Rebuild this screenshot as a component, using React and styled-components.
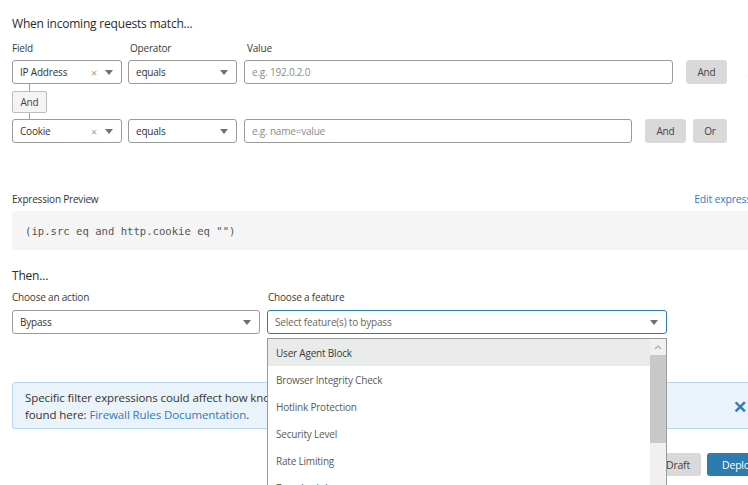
import React from "react";
import styled, { createGlobalStyle } from "styled-components";

const FONT = `"Open Sans", "Liberation Sans", sans-serif`;

const Global = createGlobalStyle`
  html, body { margin: 0; padding: 0; background: #fff; overflow: hidden; }
  body { font-family: ${FONT}; color: #333; letter-spacing: -0.2px; }
  * { box-sizing: border-box; }
`;

const Page = styled.div`
  width: 770px;
  padding: 15px 0 40px 12px;
  display: flex;
  flex-direction: column;
`;

const Heading = styled.div`
  font-size: 12px;
  line-height: 18px;
  color: #2b2b2b;
`;

const LabelRow = styled.div`
  display: flex;
  gap: 8px;
  margin-top: ${(p) => p.mt || 0}px;
`;

const Label = styled.div`
  font-size: 10px;
  line-height: 14px;
  color: #3a3a3a;
  width: ${(p) => (p.w ? p.w + "px" : "auto")};
  flex: ${(p) => (p.w ? "none" : "1")};
`;

const Row = styled.div`
  display: flex;
  align-items: center;
  margin-top: ${(p) => p.mt || 0}px;
`;

const SelectBox = styled.div`
  position: relative;
  width: ${(p) => p.w}px;
  height: 24px;
  flex: none;
  margin-right: ${(p) => p.mr || 0}px;
  border: 1px solid ${(p) => (p.focus ? "#2c7cb0" : "#9b9b9b")};
  border-radius: 3px;
  background: #fff;
  display: flex;
  align-items: center;
  padding: 0 8px 0 7px;
  font-size: 10px;
  color: ${(p) => (p.placeholder ? "#666" : "#333")};
`;

const SelectText = styled.span`
  flex: 1;
  white-space: nowrap;
  overflow: hidden;
`;

const Clear = styled.span`
  color: #c0967a;
  font-size: 11px;
  margin-right: 8px;
`;

const Arrow = styled.span`
  width: 0;
  height: 0;
  border-left: 4px solid transparent;
  border-right: 4px solid transparent;
  border-top: 5px solid #707070;
`;

const Input = styled.input`
  flex: 1;
  min-width: 0;
  height: 24px;
  border: 1px solid #9b9b9b;
  border-radius: 3px;
  padding: 0 7px;
  font-family: ${FONT};
  font-size: 10px;
  letter-spacing: -0.2px;
  color: #333;
  outline: none;
  &::placeholder { color: #8a8a8a; }
`;

const BtnGroup = styled.div`
  display: flex;
  gap: 7px;
  margin-left: 13px;
`;

const GrayBtn = styled.button`
  height: 24px;
  width: ${(p) => p.w}px;
  border: none;
  border-radius: 3px;
  background: #d9d9d9;
  color: #444;
  font-family: ${FONT};
  font-size: 10px;
  letter-spacing: -0.2px;
  padding: 0;
`;

const Remove = styled.span`
  margin-left: 20px;
  width: 23px;
  font-size: 17px;
  line-height: 1;
  color: #333;
  font-weight: 700;
`;

const Connector = styled.div`
  display: flex;
  flex-direction: column;
  align-items: flex-start;
`;

const VLine = styled.div`
  width: 1px;
  height: ${(p) => p.h}px;
  background: #a0a0a0;
  margin-left: 17px;
`;

const AndChip = styled.div`
  width: 35px;
  height: 22px;
  border: 1px solid #bdbdbd;
  border-radius: 2px;
  background: #f4f4f4;
  font-size: 10px;
  color: #444;
  display: flex;
  align-items: center;
  justify-content: center;
`;

const PreviewHead = styled.div`
  display: flex;
  justify-content: space-between;
  align-items: baseline;
  margin-top: 49px;
  font-size: 10px;
  line-height: 14px;
`;

const Link = styled.a`
  color: #2f7bbf;
  text-decoration: none;
  cursor: pointer;
`;

const EditLink = styled(Link)`
  font-size: 10.5px;
  margin-right: 4px;
`;

const Preview = styled.div`
  margin-top: 5px;
  height: 39px;
  background: #f5f5f5;
  border-radius: 3px;
  display: flex;
  align-items: center;
  padding-left: 13px;
  font-family: "DejaVu Sans Mono", "Liberation Mono", monospace;
  font-size: 10.6px;
  letter-spacing: 0;
  color: #555;
  white-space: pre;
`;

const SubHeading = styled(Heading)`
  margin-top: 17px;
`;

const FeatureWrap = styled.div`
  position: relative;
`;

const Dropdown = styled.div`
  position: absolute;
  left: 0;
  top: 28px;
  width: 400px;
  height: 165px;
  border: 1px solid #9a9a9a;
  background: #fff;
  z-index: 5;
  display: flex;
`;

const List = styled.div`
  flex: 1;
  display: flex;
  flex-direction: column;
  overflow: hidden;
`;

const Item = styled.div`
  height: 27px;
  flex: none;
  display: flex;
  align-items: center;
  padding-left: 8px;
  font-size: 10px;
  color: ${(p) => (p.active ? "#3a3a3a" : "#5a5a5a")};
  background: ${(p) => (p.active ? "#e9ebea" : "#fff")};
`;

const Scrollbar = styled.div`
  width: 16px;
  background: #f0f0f0;
  display: flex;
  flex-direction: column;
  align-items: center;
`;

const ScrollArrow = styled.div`
  height: 16px;
  width: 16px;
  display: flex;
  align-items: center;
  justify-content: center;
  flex: none;
`;

const Thumb = styled.div`
  width: 16px;
  height: 88px;
  background: #c8c8c8;
  flex: none;
`;

const Spacer = styled.div`
  flex: 1;
`;

const Info = styled.div`
  margin-top: 48px;
  height: 47px;
  border: 1px solid #b5d6ee;
  border-radius: 3px;
  background: #eaf3fa;
  display: flex;
  align-items: center;
  padding: 0 22px 0 12px;
  gap: 20px;
`;

const InfoText = styled.div`
  flex: 1;
  font-size: 11.5px;
  line-height: 17px;
  letter-spacing: -0.1px;
  color: #333;
`;

const Close = styled.span`
  color: #2f7bbf;
  font-size: 17px;
  font-weight: 700;
  line-height: 1;
  margin-top: 2px;
`;

const Footer = styled.div`
  margin-top: 24px;
  display: flex;
  justify-content: flex-end;
  gap: 6px;
`;

const FootBtn = styled.button`
  height: 23px;
  width: ${(p) => (p.w ? p.w + "px" : "auto")};
  padding: 0 11px;
  border: none;
  border-radius: 3px;
  background: ${(p) => (p.primary ? "#2c7cb0" : "#d9d9d9")};
  color: ${(p) => (p.primary ? "#fff" : "#444")};
  font-family: ${FONT};
  font-size: 10.5px;
  letter-spacing: -0.2px;
`;

function Select({ w, mr, value, clear, focus, placeholder }) {
  return (
    <SelectBox w={w} mr={mr} focus={focus} placeholder={placeholder}>
      <SelectText>{value}</SelectText>
      {clear && <Clear>×</Clear>}
      <Arrow />
    </SelectBox>
  );
}

const Chevron = ({ up }) => (
  <svg width="8" height="6" viewBox="0 0 8 6">
    <path
      d={up ? "M1 5 L4 2 L7 5" : "M1 1 L4 4 L7 1"}
      fill="none"
      stroke={up ? "#b0b0b0" : "#707070"}
      strokeWidth="1.4"
    />
  </svg>
);

const features = [
  "User Agent Block",
  "Browser Integrity Check",
  "Hotlink Protection",
  "Security Level",
  "Rate Limiting",
  "Zone Lockdown",
];

export default function App() {
  return (
    <>
      <Global />
      <Page>
        <Heading>When incoming requests match...</Heading>
        <LabelRow mt={8}>
          <Label w={110}>Field</Label>
          <Label w={109}>Operator</Label>
          <Label>Value</Label>
        </LabelRow>
        <Row mt={5}>
          <Select w={110} mr={6} value="IP Address" clear />
          <Select w={109} mr={7} value="equals" />
          <Input placeholder="e.g. 192.0.2.0" />
          <BtnGroup>
            <GrayBtn w={41}>And</GrayBtn>
          </BtnGroup>
          <Remove>×</Remove>
        </Row>
        <Connector>
          <VLine h={7} />
          <AndChip>And</AndChip>
          <VLine h={6} />
        </Connector>
        <Row>
          <Select w={110} mr={6} value="Cookie" clear />
          <Select w={109} mr={7} value="equals" />
          <Input placeholder="e.g. name=value" />
          <BtnGroup>
            <GrayBtn w={41}>And</GrayBtn>
            <GrayBtn w={34}>Or</GrayBtn>
          </BtnGroup>
          <Remove>×</Remove>
        </Row>

        <PreviewHead>
          <span>Expression Preview</span>
          <EditLink>Edit expression</EditLink>
        </PreviewHead>
        <Preview>{'(ip.src eq and http.cookie eq "")'}</Preview>

        <SubHeading>Then...</SubHeading>
        <LabelRow mt={5}>
          <Label w={248}>Choose an action</Label>
          <Label>Choose a feature</Label>
        </LabelRow>
        <Row mt={6}>
          <Select w={248} mr={7} value="Bypass" />
          <FeatureWrap>
            <Select w={400} value="Select feature(s) to bypass" focus placeholder />
            <Dropdown>
              <List>
                {features.map((f, i) => (
                  <Item key={f} active={i === 0}>
                    {f}
                  </Item>
                ))}
              </List>
              <Scrollbar>
                <ScrollArrow>
                  <Chevron up />
                </ScrollArrow>
                <Thumb />
                <Spacer />
                <ScrollArrow>
                  <Chevron />
                </ScrollArrow>
              </Scrollbar>
            </Dropdown>
          </FeatureWrap>
        </Row>

        <Info>
          <InfoText>
            Specific filter expressions could affect how known bots are handled. More information can be
            <br />
            found here: <Link>Firewall Rules Documentation</Link>.
          </InfoText>
          <Close>✕</Close>
        </Info>

        <Footer>
          <FootBtn>Cancel</FootBtn>
          <FootBtn>Save as Draft</FootBtn>
          <FootBtn primary w={63}>Deploy</FootBtn>
        </Footer>
      </Page>
    </>
  );
}
